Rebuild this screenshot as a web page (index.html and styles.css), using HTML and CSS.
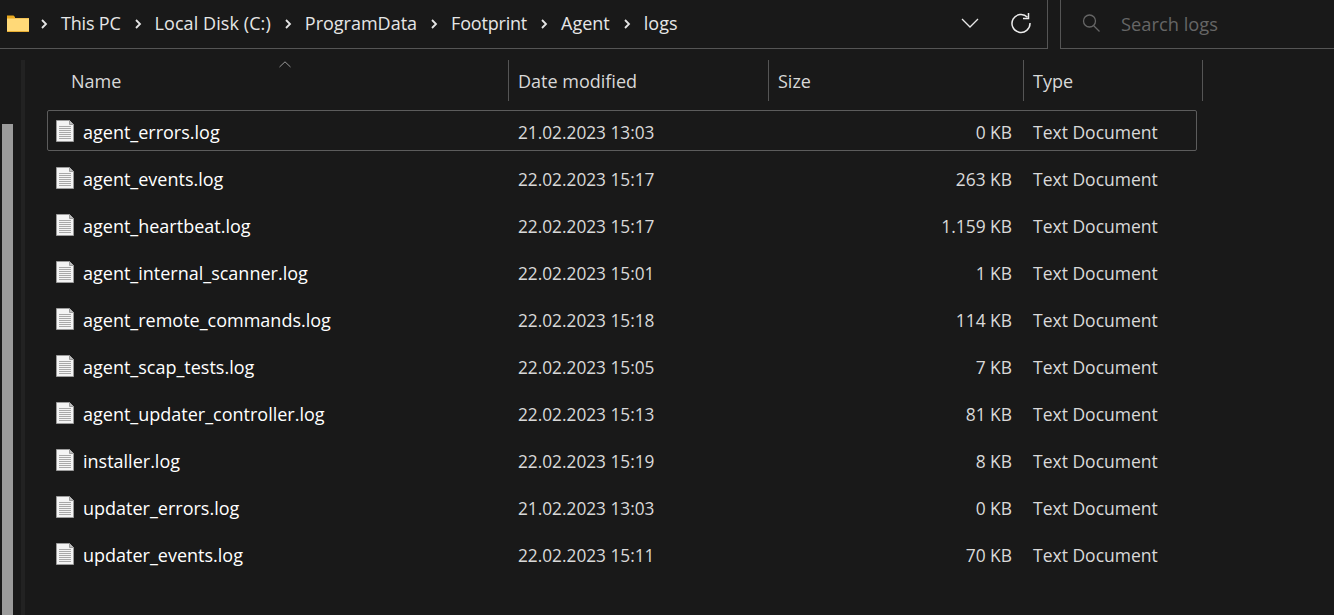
FILE: index.html
```html
<!DOCTYPE html>
<html lang="en">
<head>
<meta charset="utf-8">
<title>logs</title>
<link rel="stylesheet" href="styles.css">
</head>
<body>
<header class="topbar">
  <nav class="address">
    <svg class="folder" width="24" height="18" viewBox="0 0 24 18"><path d="M1 .5h6.500l1.500 1.500V4H1z" fill="#e9a91f"/><path d="M1 3h22v14H1z" fill="#e8ae33"/><path d="M1 3.500h22V16H1z" fill="#ffd978"/><path d="M1 3h8l-.5 1H1z" fill="#f3c04d"/></svg>
    <svg class="chev" width="8" height="10" viewBox="0 0 8 10"><path d="M2 1l4 4-4 4" fill="none" stroke="#e6e6e6" stroke-width="1.800"/></svg>
    <span class="crumb crumb-tight">This PC</span>
    <svg class="chev" width="8" height="10" viewBox="0 0 8 10"><path d="M2 1l4 4-4 4" fill="none" stroke="#e6e6e6" stroke-width="1.800"/></svg>
    <span class="crumb crumb-wide">Local Disk (C:)</span>
    <svg class="chev" width="8" height="10" viewBox="0 0 8 10"><path d="M2 1l4 4-4 4" fill="none" stroke="#e6e6e6" stroke-width="1.800"/></svg>
    <span class="crumb">ProgramData</span>
    <svg class="chev" width="8" height="10" viewBox="0 0 8 10"><path d="M2 1l4 4-4 4" fill="none" stroke="#e6e6e6" stroke-width="1.800"/></svg>
    <span class="crumb crumb-tight">Footprint</span>
    <svg class="chev" width="8" height="10" viewBox="0 0 8 10"><path d="M2 1l4 4-4 4" fill="none" stroke="#e6e6e6" stroke-width="1.800"/></svg>
    <span class="crumb">Agent</span>
    <svg class="chev" width="8" height="10" viewBox="0 0 8 10"><path d="M2 1l4 4-4 4" fill="none" stroke="#e6e6e6" stroke-width="1.800"/></svg>
    <span class="crumb">logs</span>
    <span class="address-tools">
      <svg width="18" height="10" viewBox="0 0 18 10"><path d="M1 1l8 8 8-8" fill="none" stroke="#e8e8e8" stroke-width="1.300"/></svg>
      <svg width="22" height="22" viewBox="0 0 22 22"><path d="M17.500 5.200A9 9 0 1 0 20 11" fill="none" stroke="#ededed" stroke-width="1.500"/><path d="M18.500 1v5.500H13" fill="none" stroke="#ededed" stroke-width="1.500"/></svg>
    </span>
  </nav>
  <div class="search">
    <svg width="18" height="18" viewBox="0 0 18 18"><circle cx="7.500" cy="7" r="6" fill="none" stroke="#666" stroke-width="1.300"/><path d="M11.500 11.500l6 6" stroke="#666" stroke-width="1.300"/></svg>
    <span class="search-text">Search logs</span>
  </div>
</header>
<main class="content">
  <div class="nav-pane"><div class="scroll-track"><div class="scroll-thumb"></div></div></div>
  <div class="splitter"></div>
  <section class="details">
    <div class="head">
      <div class="col c-name">Name<svg class="sort" width="12" height="7" viewBox="0 0 12 7"><path d="M.5 6L6 .8 11.500 6" fill="none" stroke="#9a9a9a"/></svg></div>
      <div class="col c-date">Date modified</div>
      <div class="col c-size">Size</div>
      <div class="col c-type">Type</div>
    </div>
    <div class="row selected"><svg class="doc" width="18" height="22" viewBox="0 0 18 22"><use href="#doc"/></svg><span class="n">agent_errors.log</span><span class="d">21.02.2023 13:03</span><span class="s">0 KB</span><span class="t">Text Document</span></div>
    <div class="row"><svg class="doc" width="18" height="22" viewBox="0 0 18 22"><use href="#doc"/></svg><span class="n">agent_events.log</span><span class="d">22.02.2023 15:17</span><span class="s">263 KB</span><span class="t">Text Document</span></div>
    <div class="row"><svg class="doc" width="18" height="22" viewBox="0 0 18 22"><use href="#doc"/></svg><span class="n">agent_heartbeat.log</span><span class="d">22.02.2023 15:17</span><span class="s">1.159 KB</span><span class="t">Text Document</span></div>
    <div class="row"><svg class="doc" width="18" height="22" viewBox="0 0 18 22"><use href="#doc"/></svg><span class="n">agent_internal_scanner.log</span><span class="d">22.02.2023 15:01</span><span class="s">1 KB</span><span class="t">Text Document</span></div>
    <div class="row"><svg class="doc" width="18" height="22" viewBox="0 0 18 22"><use href="#doc"/></svg><span class="n">agent_remote_commands.log</span><span class="d">22.02.2023 15:18</span><span class="s">114 KB</span><span class="t">Text Document</span></div>
    <div class="row"><svg class="doc" width="18" height="22" viewBox="0 0 18 22"><use href="#doc"/></svg><span class="n">agent_scap_tests.log</span><span class="d">22.02.2023 15:05</span><span class="s">7 KB</span><span class="t">Text Document</span></div>
    <div class="row"><svg class="doc" width="18" height="22" viewBox="0 0 18 22"><use href="#doc"/></svg><span class="n">agent_updater_controller.log</span><span class="d">22.02.2023 15:13</span><span class="s">81 KB</span><span class="t">Text Document</span></div>
    <div class="row"><svg class="doc" width="18" height="22" viewBox="0 0 18 22"><use href="#doc"/></svg><span class="n">installer.log</span><span class="d">22.02.2023 15:19</span><span class="s">8 KB</span><span class="t">Text Document</span></div>
    <div class="row"><svg class="doc" width="18" height="22" viewBox="0 0 18 22"><use href="#doc"/></svg><span class="n">updater_errors.log</span><span class="d">21.02.2023 13:03</span><span class="s">0 KB</span><span class="t">Text Document</span></div>
    <div class="row"><svg class="doc" width="18" height="22" viewBox="0 0 18 22"><use href="#doc"/></svg><span class="n">updater_events.log</span><span class="d">22.02.2023 15:11</span><span class="s">70 KB</span><span class="t">Text Document</span></div>
  </section>
</main>
<svg class="defs" width="0" height="0"><defs><g id="doc"><path d="M.5.500h13l4 4v17H.5z" fill="#f4f4f4" stroke="#9c9c9c"/><path d="M13.500.500v4h4" fill="#bdbdbd" stroke="#9c9c9c"/><path d="M3 6.500h12M3 8.500h12M3 10.500h12M3 12.500h12M3 14.500h12M3 16.500h12M3 18.500h12" stroke="#a8a8a8"/></g></defs></svg>
</body>
</html>
```
FILE: styles.css
```css
* { box-sizing: border-box; }
html, body { margin: 0; height: 100%; overflow: hidden; }
body {
  width: 1334px;
  height: 615px;
  background: #191919;
  color: #fff;
  font-family: "Open Sans", "Noto Sans", sans-serif;
  font-size: 18px;
  display: flex;
  flex-direction: column;
}
.topbar { display: flex; height: 49px; flex: none; gap: 12px; }
.address {
  width: 1048px;
  display: flex;
  align-items: center;
  padding-left: 6px;
  padding-bottom: 2px;
  border-right: 1px solid #555;
  border-bottom: 1px solid #555;
  color: #e6e6e6;
}
.folder { margin-right: 10px; margin-top: 2px; }
.chev { margin-right: 13px; margin-top: 2px; }
.crumb { margin-right: 13px; }
.crumb-tight { letter-spacing: -.2px; }
.crumb-wide { letter-spacing: .08px; }
.address-tools { margin-left: auto; margin-right: 15px; display: flex; align-items: center; gap: 31px; }
.search {
  flex: 1;
  display: flex;
  align-items: center;
  gap: 21px;
  padding-left: 21px;
  padding-bottom: 2px;
  border-left: 1px solid #555;
  border-bottom: 1px solid #555;
  color: #666;
}
.search-text { font-size: 18.300px; }
.content { flex: 1; display: flex; min-height: 0; padding-top: 11px; }
.nav-pane { width: 21px; flex: none; padding-left: 2px; }
.scroll-track { width: 11px; height: 100%; padding-top: 64px; }
.scroll-thumb { height: 100%; background: #9b9b9b; }
.splitter { width: 4px; flex: none; background: #222; }
.details { flex: 1; padding-left: 22px; }
.head { display: flex; height: 41px; color: #d8d8d8; margin-bottom: 9px; }
.col { height: 100%; display: flex; align-items: center; padding-left: 9px; border-right: 1px solid #555; position: relative; }
.c-name { width: 462px; padding-left: 24px; }
.c-date { width: 260px; }
.c-size { width: 255px; }
.c-type { width: 179px; }
.sort { position: absolute; left: 232px; top: 1px; }
.row {
  display: flex;
  align-items: center;
  width: 1150px;
  height: 41px;
  margin-bottom: 6px;
  border: 1px solid transparent;
  border-radius: 2px;
  color: #e8e8e8;
}
.row.selected { border-color: #5c5c5c; }
.row span { position: relative; top: 1px; }
.doc { margin-left: 8px; margin-right: 9px; flex: none; }
.n { width: 435px; color: #fff; }
.row .d { width: 260px; color: #d9d9d9; font-size: 17.250px; top: 2px; }
.s { width: 234px; text-align: right; color: #d9d9d9; font-size: 17.400px; }
.t { margin-left: 21px; color: #d9d9d9; font-size: 17.500px; }
.defs { position: absolute; }
```
